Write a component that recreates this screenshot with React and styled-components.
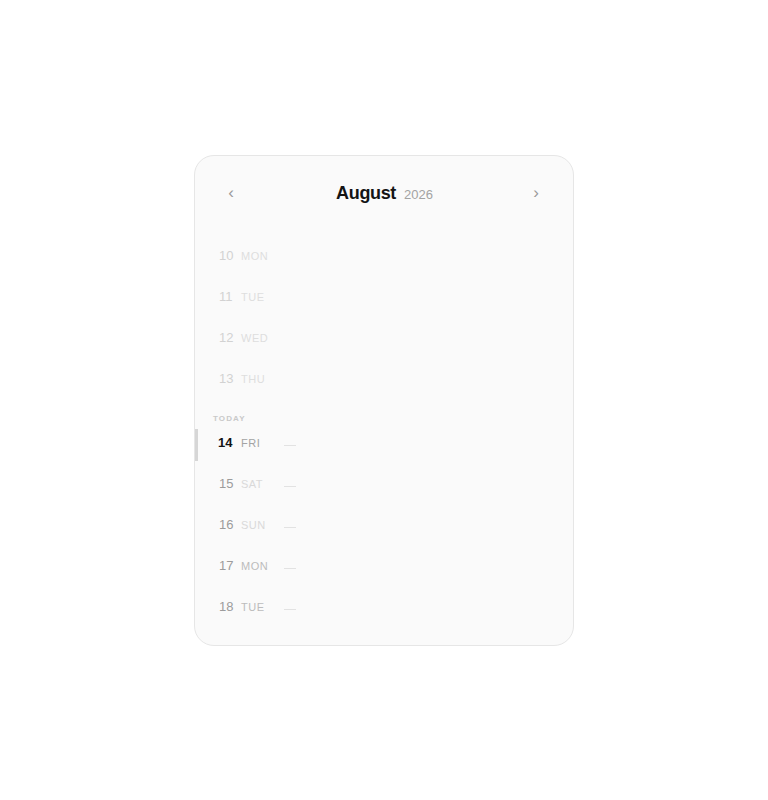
import React from "react";
import styled, { createGlobalStyle } from "styled-components";

const Global = createGlobalStyle`
  html, body { margin: 0; padding: 0; background: #ffffff; }
  body { font-family: "Liberation Sans", Arial, Helvetica, sans-serif; }
`;

const Page = styled.div`
  display: flex;
  justify-content: center;
  padding-top: 155px;
  min-height: 800px;
  box-sizing: border-box;
`;

const Card = styled.div`
  width: 380px;
  height: 491px;
  box-sizing: border-box;
  background: #fafafa;
  border: 1px solid #e6e6e6;
  border-radius: 20px;
  overflow: hidden;
  display: flex;
  flex-direction: column;
`;

const Header = styled.div`
  display: grid;
  grid-template-columns: 1fr auto 1fr;
  align-items: center;
  height: 32px;
  padding: 21px 26px 1px 26px;
`;

const NavButton = styled.button`
  justify-self: ${(p) => (p.$end ? "end" : "start")};
  margin-right: ${(p) => (p.$end ? "1px" : "0")};
  width: 20px;
  height: 32px;
  border: none;
  background: transparent;
  padding: 0;
  color: #9a9a9a;
  font-family: "Liberation Sans", Arial, sans-serif;
  font-size: 17px;
  line-height: 32px;
  cursor: pointer;
`;

const Title = styled.div`
  display: flex;
  align-items: baseline;
  gap: 8px;
  padding-left: 1px;
`;

const Month = styled.span`
  font-size: 18px;
  font-weight: 700;
  letter-spacing: -0.35px;
  color: #141414;
`;

const Year = styled.span`
  font-size: 13px;
  color: #a3a3a3;
`;

const List = styled.div`
  display: flex;
  flex-direction: column;
  padding-top: 25px;
`;

const TodayLabel = styled.div`
  padding: 16px 0 0 18px;
  line-height: 7px;
  font-size: 8px;
  font-weight: 700;
  letter-spacing: 1.1px;
  color: #c9c9c9;
`;

const Row = styled.div`
  position: relative;
  display: flex;
  align-items: center;
  height: 41px;
  padding-left: 24px;
  flex-shrink: 0;
  &::before {
    content: "";
    display: ${(p) => (p.$today ? "block" : "none")};
    position: absolute;
    left: 0;
    top: 7px;
    width: 3px;
    height: 32px;
    background: #d6d6d6;
  }
`;

const DayNum = styled.span`
  width: 16px;
  margin-right: 6px;
  font-size: 13px;
  font-weight: ${(p) => (p.$today ? 700 : 400)};
  color: ${(p) => (p.$today ? "#141414" : p.$past ? "#d2d2d2" : "#9c9c9c")};
  margin-left: ${(p) => (p.$today ? "-1px" : "0")};
  padding-right: ${(p) => (p.$today ? "1px" : "0")};
`;

const DayName = styled.span`
  width: 37px;
  margin-right: 6px;
  font-size: 11px;
  letter-spacing: 0.5px;
  color: ${(p) => p.$color};
`;

const Dash = styled.span`
  display: block;
  width: 12px;
  height: 1px;
  margin-top: 6px;
  background: #e2e2e2;
`;

const days = [
  { n: 10, d: "MON", past: true },
  { n: 11, d: "TUE", past: true },
  { n: 12, d: "WED", past: true },
  { n: 13, d: "THU", past: true },
  { n: 14, d: "FRI", today: true },
  { n: 15, d: "SAT", weekend: true },
  { n: 16, d: "SUN", weekend: true },
  { n: 17, d: "MON" },
  { n: 18, d: "TUE" },
];

function nameColor(day) {
  if (day.today) return "#a3a3a3";
  if (day.past) return "#dedede";
  if (day.weekend) return "#d9d9d9";
  return "#bcbcbc";
}

export default function App() {
  return (
    <>
      <Global />
      <Page>
        <Card>
          <Header>
            <NavButton aria-label="Previous month">‹</NavButton>
            <Title>
              <Month>August</Month>
              <Year>2026</Year>
            </Title>
            <NavButton $end aria-label="Next month">›</NavButton>
          </Header>
          <List>
            {days.map((day) => (
              <React.Fragment key={day.n}>
                {day.today && <TodayLabel>TODAY</TodayLabel>}
                <Row $today={day.today}>
                  <DayNum $today={day.today} $past={day.past}>
                    {day.n}
                  </DayNum>
                  <DayName $color={nameColor(day)}>{day.d}</DayName>
                  {!day.past && <Dash />}
                </Row>
              </React.Fragment>
            ))}
          </List>
        </Card>
      </Page>
    </>
  );
}
